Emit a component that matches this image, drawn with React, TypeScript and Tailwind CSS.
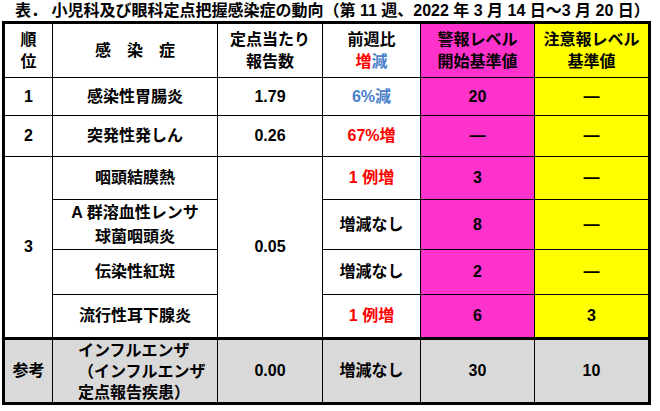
const font = "font-['Liberation_Sans','Noto_Sans_CJK_JP',sans-serif] font-bold";

const cell = "bg-white flex items-center justify-center text-center";
const pink = "bg-[#ff33cc] flex items-center justify-center text-center";
const yellow = "bg-[#ffff00] flex items-center justify-center text-center";
const gray = "bg-[#d9d9d9] flex items-center justify-center text-center border-t-2 border-black";

const Up = ({ children }: { children: React.ReactNode }) => (
  <span className="text-[#ff0000]">{children}</span>
);

export default function App() {
  return (
    <div className={`${font} w-[660px] h-[411px] bg-white text-black text-[16px]`}>
      {/* Title */}
      <div className="h-[21px] pl-[15px] leading-[21px] whitespace-nowrap">
        表． 小児科及び眼科定点把握感染症の動向（第 11 週、2022 年 3 月 14 日～3 月 20 日）
      </div>

      {/* Table */}
      <div className="ml-[2px] w-[649px] border-[3px] border-black bg-black grid grid-cols-[47px_164px_104px_97px_113px_113px] grid-rows-[53px_37px_40px_42px_49px_44px_42px_64px] gap-px">
        {/* header */}
        <div className={`${cell} leading-[22px]`}>
          順<br />位
        </div>
        <div className={cell}>感　染　症</div>
        <div className={`${cell} leading-[22px]`}>
          定点当たり<br />報告数
        </div>
        <div className={`${cell} leading-[22px]`}>
          <div>
            前週比
            <br />
            <span className="text-[#ff0000]">増</span>
            <span className="text-[#4a7fcb]">減</span>
          </div>
        </div>
        <div className={`${pink} leading-[22px]`}>
          警報レベル<br />開始基準値
        </div>
        <div className={`${yellow} leading-[22px]`}>
          注意報レベル<br />基準値
        </div>

        {/* rank 1 */}
        <div className={cell}>1</div>
        <div className={cell}>感染性胃腸炎</div>
        <div className={cell}>1.79</div>
        <div className={`${cell} text-[#4a7fcb]`}>6%減</div>
        <div className={pink}>20</div>
        <div className={yellow}>—</div>

        {/* rank 2 */}
        <div className={cell}>2</div>
        <div className={cell}>突発性発しん</div>
        <div className={cell}>0.26</div>
        <div className={cell}>
          <Up>67%増</Up>
        </div>
        <div className={pink}>—</div>
        <div className={yellow}>—</div>

        {/* rank 3 */}
        <div className={`${cell} row-span-4`}>3</div>
        <div className={cell}>咽頭結膜熱</div>
        <div className={`${cell} row-span-4`}>0.05</div>
        <div className={cell}>
          <Up>1 例増</Up>
        </div>
        <div className={pink}>3</div>
        <div className={yellow}>—</div>

        <div className={`${cell} leading-[24px]`}>
          A 群溶血性レンサ
          <br />
          球菌咽頭炎
        </div>
        <div className={cell}>増減なし</div>
        <div className={pink}>8</div>
        <div className={yellow}>—</div>

        <div className={cell}>伝染性紅斑</div>
        <div className={cell}>増減なし</div>
        <div className={pink}>2</div>
        <div className={yellow}>—</div>

        <div className={cell}>流行性耳下腺炎</div>
        <div className={cell}>
          <Up>1 例増</Up>
        </div>
        <div className={pink}>6</div>
        <div className={yellow}>3</div>

        {/* reference */}
        <div className={gray}>参考</div>
        <div className={`${gray} !justify-start !text-left pl-[25px] leading-[21px]`}>
          <div>
            インフルエンザ
            <br />
            （インフルエンザ
            <br />
            定点報告疾患）
          </div>
        </div>
        <div className={gray}>0.00</div>
        <div className={gray}>増減なし</div>
        <div className={gray}>30</div>
        <div className={gray}>10</div>
      </div>
    </div>
  );
}
